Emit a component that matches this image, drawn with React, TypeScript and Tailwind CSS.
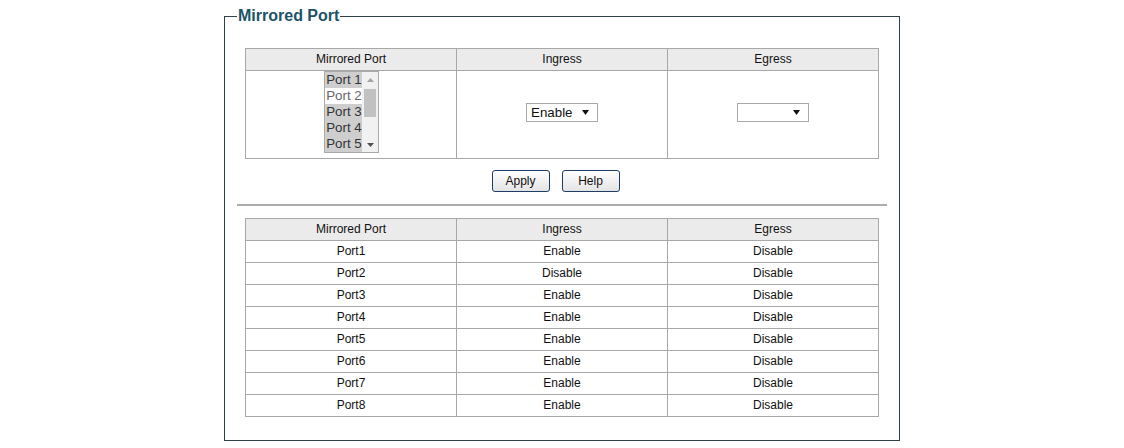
const ports = [
  { name: "Port1", ingress: "Enable", egress: "Disable" },
  { name: "Port2", ingress: "Disable", egress: "Disable" },
  { name: "Port3", ingress: "Enable", egress: "Disable" },
  { name: "Port4", ingress: "Enable", egress: "Disable" },
  { name: "Port5", ingress: "Enable", egress: "Disable" },
  { name: "Port6", ingress: "Enable", egress: "Disable" },
  { name: "Port7", ingress: "Enable", egress: "Disable" },
  { name: "Port8", ingress: "Enable", egress: "Disable" },
];

const listItems = [
  { label: "Port 1", selected: true },
  { label: "Port 2", selected: false },
  { label: "Port 3", selected: true },
  { label: "Port 4", selected: true },
  { label: "Port 5", selected: true },
];

const Caret = () => (
  <svg width="7" height="5" viewBox="0 0 7 5" className="block">
    <path d="M0 0H7L3.5 5Z" fill="#111" />
  </svg>
);

const FakeSelect = ({ value }: { value: string }) => (
  <div className="inline-flex items-center justify-between w-[72px] h-[19px] border border-[#a9a9a9] bg-white pl-[4px] pr-[8px] text-[13.33px] text-[#111] leading-none">
    <span>{value}</span>
    <Caret />
  </div>
);

const PortList = () => (
  <div className="flex w-[55px] h-[82px] border border-[#a9a9a9] bg-white">
    <div className="w-[37px]">
      {listItems.map((it) => (
        <div
          key={it.label}
          className={`h-[16px] pl-[1px] text-[13.33px] leading-[16px] whitespace-nowrap ${
            it.selected ? "bg-[#cecece] text-[#333]" : "bg-white text-[#666]"
          }`}
        >
          {it.label}
        </div>
      ))}
    </div>
    <div className="flex flex-col w-[16px] bg-[#f1f1f1]">
      <div className="h-[15px] flex items-center justify-center">
        <svg width="7" height="4" viewBox="0 0 7 4">
          <path d="M0 4H7L3.5 0Z" fill="#a3a3a3" />
        </svg>
      </div>
      <div className="h-[28px] mx-[2px] mt-[2px] bg-[#c1c1c1]" />
      <div className="flex-1" />
      <div className="h-[15px] flex items-center justify-center">
        <svg width="7" height="4" viewBox="0 0 7 4">
          <path d="M0 0H7L3.5 4Z" fill="#505050" />
        </svg>
      </div>
    </div>
  </div>
);

const Btn = ({ children }: { children: string }) => (
  <button className="w-[58px] h-[22px] border border-[#1d3c66] rounded-[3px] bg-gradient-to-b from-white to-[#e4e4e4] text-[12px] text-[#111] leading-none">
    {children}
  </button>
);

const cell = "border border-[#a8a8a8] p-0 pb-[1px] text-center text-[12px] text-[#111]";

export default function App() {
  return (
    <div className="bg-white w-[1124px] h-[448px] pt-[7px]" style={{ fontFamily: '"Liberation Sans", Arial, sans-serif' }}>
      <fieldset className="w-[676px] h-[434px] mx-auto border border-[#2e4048] pl-[12px]">
        <legend className="px-[1px] text-[16px] leading-[18px] font-bold text-[#1b5468]">Mirrored Port</legend>
        <div className="-ml-[12px] flex flex-col items-center">
          <table className="mt-[23px] w-[634px] border-collapse table-fixed">
            <thead>
              <tr className="bg-[#ebebeb] h-[22px]">
                <th className={`${cell} font-normal`}>Mirrored Port</th>
                <th className={`${cell} font-normal`}>Ingress</th>
                <th className={`${cell} font-normal`}>Egress</th>
              </tr>
            </thead>
            <tbody>
              <tr className="h-[88px]">
                <td className={`${cell} align-top`}>
                  <div className="flex justify-center pl-[1px]">
                    <PortList />
                  </div>
                </td>
                <td className={cell}>
                  <div className="flex justify-center pb-[3px]">
                    <FakeSelect value="Enable" />
                  </div>
                </td>
                <td className={cell}>
                  <div className="flex justify-center pb-[3px]">
                    <FakeSelect value="" />
                  </div>
                </td>
              </tr>
            </tbody>
          </table>

          <div className="mt-[11px] flex gap-[12px] pr-[13px]">
            <Btn>Apply</Btn>
            <Btn>Help</Btn>
          </div>

          <div className="mt-[12px] w-[650px] h-[2px] bg-[#acacac]" />

          <table className="mt-[12px] w-[634px] border-collapse table-fixed">
            <thead>
              <tr className="bg-[#ebebeb] h-[22px]">
                <th className={`${cell} font-normal`}>Mirrored Port</th>
                <th className={`${cell} font-normal`}>Ingress</th>
                <th className={`${cell} font-normal`}>Egress</th>
              </tr>
            </thead>
            <tbody>
              {ports.map((p) => (
                <tr key={p.name} className="h-[22px]">
                  <td className={cell}>{p.name}</td>
                  <td className={cell}>{p.ingress}</td>
                  <td className={cell}>{p.egress}</td>
                </tr>
              ))}
            </tbody>
          </table>
        </div>
      </fieldset>
    </div>
  );
}
